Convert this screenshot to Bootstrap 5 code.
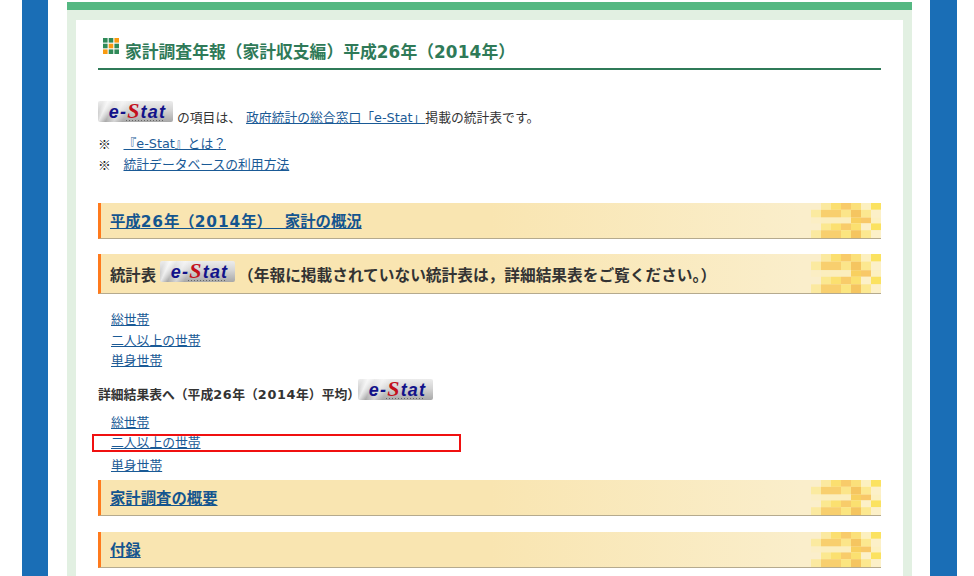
<!DOCTYPE html>
<html lang="ja">
<head>
<meta charset="utf-8">
<link href="https://cdn.jsdelivr.net/npm/bootstrap@5.3.0/dist/css/bootstrap.min.css" rel="stylesheet">
<style>
html,body{height:576px;overflow:hidden;background:#fff;}
body{font-family:"DejaVu Sans","Noto Sans CJK JP",sans-serif;font-size:12.8px;color:#333;line-height:20.5px;}
a{color:#1a5a96;}
.page-rail{margin:0 17px 0 22px;border-left:26px solid #1a6eb6;border-right:27px solid #1a6eb6;height:576px;padding:0 18px 0 19px;overflow:hidden;}
.top-strip{height:8px;margin-top:2px;background:#55b882;}
.pale-frame{background:#e2f0e2;padding:10px 9px 0;height:566px;}
.sheet{background:#fff;height:100%;padding:0 22px;overflow:hidden;}
.title-row{height:50px;border-bottom:2px solid #2f7a58;padding-top:19px;margin:0;}
.title-txt{font-size:16.8px;font-weight:700;color:#2f7a58;line-height:26px;margin:0;font-family:inherit;}
.tile-icon{width:16px;height:16px;margin:0 6px 0 5px;flex:none;position:relative;top:-1px;}
.title-txt .num{letter-spacing:.01em;}
.intro{margin-top:31px;height:25px;}
.intro-txt{line-height:18px;margin-top:8px;}
.intro-txt a{margin-left:1px;}
.estat-tag{position:relative;width:75px;height:21px;flex:none;padding-left:4px;background:linear-gradient(115deg,rgba(255,255,255,0) 6%,rgba(255,255,255,.7) 12%,rgba(255,255,255,0) 20%,rgba(255,255,255,.5) 30%,rgba(255,255,255,0) 40%),linear-gradient(180deg,#ececec 0%,#d4d4d4 45%,#a8a8a8 100%);border-radius:2px;color:#12128a;font-family:"Liberation Sans",sans-serif;font-style:italic;font-weight:700;font-size:18px;line-height:20px;text-align:center;letter-spacing:1.2px;display:inline-block;}
.estat-tag b{color:#c3101c;font-family:"Liberation Serif",serif;font-size:22px;line-height:20px;}
.estat-tag::after{content:"";position:absolute;left:28px;right:8px;bottom:1px;height:1px;background:repeating-linear-gradient(90deg,#666 0 1px,transparent 1px 3px);}
.note-line{height:21px;}
.note-mark{width:25.5px;flex:none;font-family:"Noto Sans CJK JP",sans-serif;color:#222;}
.band{border-left:3px solid #ff7a1c;border-bottom:1px solid #b5aa8e;background:linear-gradient(90deg,#f9e5b1 0%,#f9e5b1 50%,#faeecb 90%);position:relative;overflow:hidden;padding:3px 0 0 9px;font-size:15.36px;font-weight:700;color:#333;display:flex;align-items:center;}
.band a{color:#14558f;position:relative;}
.band span{position:relative;}
.band-pattern{position:absolute;right:0;top:0;height:100%;width:70px;filter:blur(.5px);}
.h36{height:36px;}
.h40{height:40px;}
.gap-15{margin-top:15px;}
.gap-4{margin-top:4px;}
.gap-16{margin-top:16px;}
.gap-27{margin-top:27px;}
.link-stack{padding-left:13px;}
.link-stack div{height:20.7px;}
.link-stack .flagged{border:2px solid #f01010;width:369px;height:18px;margin:0 0 4px -19px;padding-left:17px;line-height:14px;}
.sub-title{font-weight:700;height:35px;margin-top:6px;}
.sub-title .estat-tag{margin:0 0 13px -2px;}
.sub-title .num{letter-spacing:.05em;}
.band .tag-gap{margin:0 3px 7px 4px;}
.band .lift{margin-top:3px;}
.wide-run{font-size:15.7px;}
.num{letter-spacing:.06em;}
</style>
</head>
<body>
<div class="page-rail">
  <div class="top-strip"></div>
  <div class="pale-frame">
    <div class="sheet">
      <div class="title-row d-flex">
        <svg class="tile-icon" viewBox="0 0 16 16"><g fill="#2f8a58"><rect x="0" y="0" width="4.6" height="4.6"/><rect x="5.7" y="0" width="4.6" height="4.6"/><rect x="0" y="5.7" width="4.6" height="4.6"/><rect x="11.4" y="5.7" width="4.6" height="4.6"/><rect x="5.7" y="11.4" width="4.6" height="4.6"/><rect x="11.4" y="11.4" width="4.6" height="4.6"/></g><g fill="#f99a10"><rect x="11.4" y="0" width="4.6" height="4.6"/><rect x="5.7" y="5.7" width="4.6" height="4.6"/><rect x="0" y="11.4" width="4.6" height="4.6"/></g></svg>
        <h1 class="title-txt">家計調査年報（家計収支編）平成<span class="num">26</span>年（<span class="num">2014</span>年）</h1>
      </div>
      <div class="intro d-flex align-items-start">
        <span class="estat-tag me-1">e-<b>S</b>tat</span>
        <span class="intro-txt">の項目は、 <a href="#">政府統計の総合窓口「e-Stat」</a>掲載の統計表です。</span>
      </div>
      <div class="note-line d-flex mt-2"><span class="note-mark">※</span><a href="#">『e-Stat』とは？</a></div>
      <div class="note-line d-flex"><span class="note-mark">※</span><a href="#">統計データベースの利用方法</a></div>
      <div class="band h36 gap-27"><svg class="band-pattern" viewBox="0 0 70 36" preserveAspectRatio="none"><use href="#pat"/></svg><a href="#">平成<span class="num">26</span>年（<span class="num">2014</span>年）　 家計の概況</a></div>
      <div class="band h40 gap-15"><svg class="band-pattern" viewBox="0 0 70 36" preserveAspectRatio="none"><use href="#pat"/></svg><span class="lift">統計表</span><span class="estat-tag tag-gap">e-<b>S</b>tat</span><span class="wide-run lift">（年報に掲載されていない統計表は，詳細結果表をご覧ください。）</span></div>
      <div class="link-stack gap-16">
        <div><a href="#">総世帯</a></div>
        <div><a href="#">二人以上の世帯</a></div>
        <div><a href="#">単身世帯</a></div>
      </div>
      <div class="sub-title d-flex align-items-center">詳細結果表へ（平成<span class="num">26</span>年（<span class="num">2014</span>年）平均）<span class="estat-tag">e-<b>S</b>tat</span></div>
      <div class="link-stack">
        <div><a href="#">総世帯</a></div>
        <div class="flagged"><a href="#">二人以上の世帯</a></div>
        <div><a href="#">単身世帯</a></div>
      </div>
      <div class="band h36 gap-4"><svg class="band-pattern" viewBox="0 0 70 36" preserveAspectRatio="none"><use href="#pat"/></svg><a href="#">家計調査の概要</a></div>
      <div class="band h36 gap-16"><svg class="band-pattern" viewBox="0 0 70 36" preserveAspectRatio="none"><use href="#pat"/></svg><a href="#">付録</a></div>
    </div>
  </div>
</div>
<svg width="0" height="0" class="d-block"><defs><g id="pat">
<rect x="10" y="0" width="10" height="7" fill="#fbe9a0"/><rect x="20" y="0" width="10" height="7" fill="#fbdf70"/><rect x="30" y="0" width="10" height="7" fill="#f8cb6a"/><rect x="40" y="0" width="10" height="7" fill="#fbe07a"/><rect x="50" y="0" width="10" height="7" fill="#fcf0c0"/><rect x="60" y="0" width="10" height="7" fill="#fbe260"/>
<rect x="0" y="7" width="10" height="8" fill="#fbeaa0"/><rect x="10" y="7" width="20" height="8" fill="#f8cf6e"/><rect x="30" y="7" width="10" height="8" fill="#fbe58a"/><rect x="40" y="7" width="10" height="8" fill="#f5c560"/><rect x="50" y="7" width="10" height="8" fill="#fce890"/><rect x="60" y="7" width="10" height="8" fill="#fcf0c8"/>
<rect x="0" y="15" width="10" height="6" fill="#fbeec4"/><rect x="10" y="15" width="30" height="6" fill="#fbeebe"/><rect x="40" y="15" width="10" height="6" fill="#f8d060"/><rect x="50" y="15" width="10" height="6" fill="#f8c868"/><rect x="60" y="15" width="10" height="6" fill="#fcf0c0"/>
<rect x="10" y="21" width="10" height="7" fill="#fbe890"/><rect x="20" y="21" width="10" height="7" fill="#fbe070"/><rect x="30" y="21" width="10" height="7" fill="#f8cc6a"/><rect x="40" y="21" width="10" height="7" fill="#fbe070"/><rect x="50" y="21" width="10" height="7" fill="#fcf0c8"/><rect x="60" y="21" width="10" height="7" fill="#fbe260"/>
<rect x="0" y="28" width="10" height="8" fill="#fbe9a0"/><rect x="10" y="28" width="20" height="8" fill="#f8cf6e"/><rect x="30" y="28" width="10" height="8" fill="#fbe580"/><rect x="40" y="28" width="10" height="8" fill="#f5c560"/><rect x="50" y="28" width="10" height="8" fill="#fce890"/><rect x="60" y="28" width="10" height="8" fill="#fcf0c8"/>
</g></defs></svg>
</body>
</html>
